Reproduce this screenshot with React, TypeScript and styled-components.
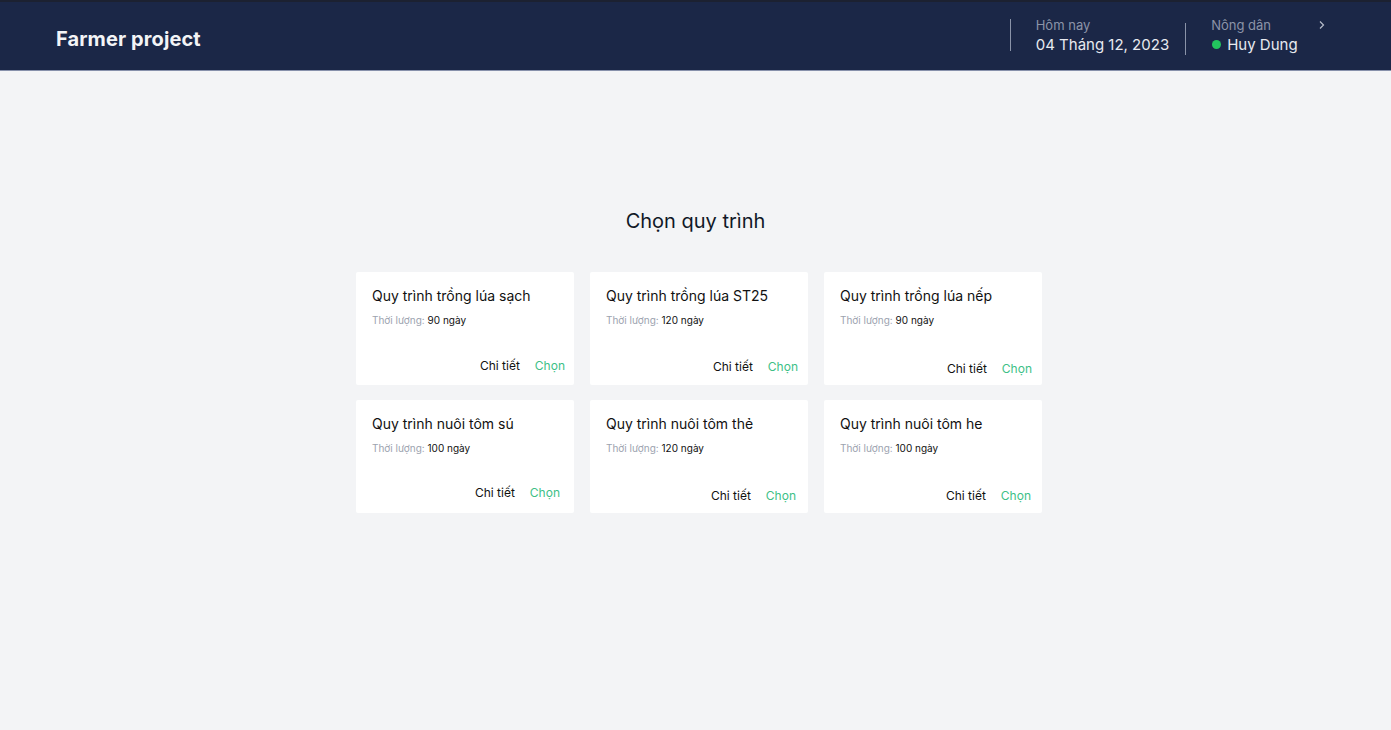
import React from 'react';
import styled, { createGlobalStyle } from 'styled-components';

const GlobalStyle = createGlobalStyle`
  html, body {
    margin: 0;
    padding: 0;
    background: #f3f4f6;
    font-family: Inter, "Noto Sans", sans-serif;
  }
  * {
    box-sizing: border-box;
  }
`;

const Page = styled.div`
  min-height: 730px;
  background: #f3f4f6;
`;

const Header = styled.header`
  height: 71px;
  background: #1b2747;
  border-top: 2px solid #1c2131;
  border-bottom: 1px solid #8791ab;
  display: flex;
  align-items: center;
  justify-content: space-between;
  padding: 0 58px 0 56px;
`;

const Brand = styled.div`
  color: #f3f4f6;
  font-size: 20px;
  font-weight: 700;
  letter-spacing: 0.1px;
  margin-top: 6px;
`;

const HeaderRight = styled.div`
  display: flex;
  align-items: center;
`;

const Divider = styled.div<{ $offset?: number }>`
  width: 1px;
  height: 32px;
  background: #8a93a8;
  margin-top: ${p => p.$offset || 0}px;
`;

const InfoBlock = styled.div`
  display: flex;
  flex-direction: column;
  padding: 0 16px 0 25px;
  margin-bottom: 2px;
`;

const InfoLabel = styled.div`
  display: flex;
  align-items: center;
  justify-content: space-between;
  color: #8c94a8;
  font-size: 13px;
  line-height: 16px;
  margin-bottom: 3px;
`;

const InfoValue = styled.div`
  display: flex;
  align-items: center;
  color: #e8eaef;
  font-size: 15px;
  line-height: 18px;
`;

const StatusDot = styled.span`
  width: 9px;
  height: 9px;
  border-radius: 50%;
  background: #22c55e;
  margin: 0 6px 0 1px;
`;

const Chevron = styled.svg`
  margin-left: 46px;
  margin-right: -10px;
`;

const Main = styled.main`
  display: flex;
  flex-direction: column;
  align-items: center;
  padding-top: 138px;
`;

const Heading = styled.h1`
  margin: 0 0 39px;
  font-size: 20px;
  font-weight: 400;
  line-height: 24px;
  color: #111827;
`;

const Grid = styled.div`
  display: grid;
  grid-template-columns: repeat(3, 218px);
  gap: 15px 16px;
  margin-left: 7px;
`;

const Card = styled.div`
  height: 113px;
  background: #ffffff;
  border-radius: 2px;
  display: flex;
  flex-direction: column;
  padding: 15px 0 0 16px;
`;

const CardTitle = styled.div`
  font-size: 14px;
  line-height: 18px;
  color: #111111;
`;

const Duration = styled.div`
  margin-top: 9px;
  font-size: 10px;
  line-height: 12px;
  color: #111111;
  span {
    color: #9ca3af;
  }
`;

const Actions = styled.div<{ $bottom: number; $right: number }>`
  margin-top: auto;
  display: flex;
  justify-content: flex-end;
  gap: 15px;
  padding-right: ${p => p.$right}px;
  padding-bottom: ${p => p.$bottom}px;
  font-size: 12px;
  line-height: 16px;
`;

const ActionLink = styled.span<{ $primary?: boolean }>`
  color: ${p => (p.$primary ? '#3dbf87' : '#111111')};
  cursor: pointer;
`;

const processes = [
  { title: 'Quy trình trồng lúa sạch', days: 90, bottom: 11, right: 9 },
  { title: 'Quy trình trồng lúa ST25', days: 120, bottom: 10, right: 10 },
  { title: 'Quy trình trồng lúa nếp', days: 90, bottom: 8, right: 10 },
  { title: 'Quy trình nuôi tôm sú', days: 100, bottom: 12, right: 14 },
  { title: 'Quy trình nuôi tôm thẻ', days: 120, bottom: 9, right: 12 },
  { title: 'Quy trình nuôi tôm he', days: 100, bottom: 9, right: 11 },
];

export default function App() {
  return (
    <Page>
      <GlobalStyle />
      <Header>
        <Brand>Farmer project</Brand>
        <HeaderRight>
          <Divider $offset={-2} />
          <InfoBlock>
            <InfoLabel>Hôm nay</InfoLabel>
            <InfoValue>04 Tháng 12, 2023</InfoValue>
          </InfoBlock>
          <Divider $offset={6} />
          <InfoBlock>
            <InfoLabel>
              Nông dân
              <Chevron width="10" height="10" viewBox="0 0 10 10">
                <path d="M3 1.5 L6.5 5 L3 8.5" fill="none" stroke="#b7bdca" strokeWidth="1.2" />
              </Chevron>
            </InfoLabel>
            <InfoValue>
              <StatusDot />
              Huy Dung
            </InfoValue>
          </InfoBlock>
        </HeaderRight>
      </Header>
      <Main>
        <Heading>Chọn quy trình</Heading>
        <Grid>
          {processes.map(p => (
            <Card key={p.title}>
              <CardTitle>{p.title}</CardTitle>
              <Duration>
                <span>Thời lượng: </span>
                {p.days} ngày
              </Duration>
              <Actions $bottom={p.bottom} $right={p.right}>
                <ActionLink>Chi tiết</ActionLink>
                <ActionLink $primary>Chọn</ActionLink>
              </Actions>
            </Card>
          ))}
        </Grid>
      </Main>
    </Page>
  );
}
